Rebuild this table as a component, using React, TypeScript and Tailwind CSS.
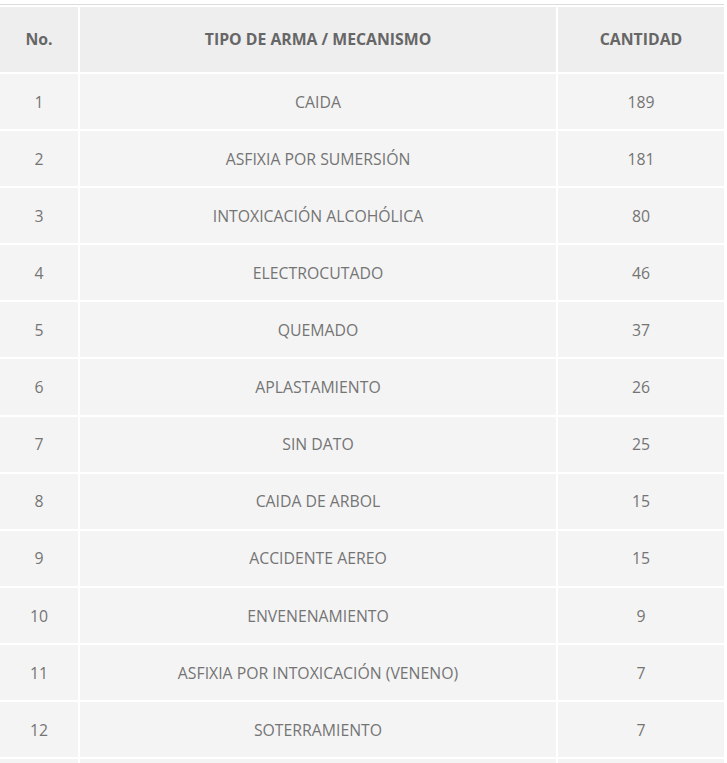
import React from "react";

const rows: [string, string, string][] = [
  ["1", "CAIDA", "189"],
  ["2", "ASFIXIA POR SUMERSIÓN", "181"],
  ["3", "INTOXICACIÓN ALCOHÓLICA", "80"],
  ["4", "ELECTROCUTADO", "46"],
  ["5", "QUEMADO", "37"],
  ["6", "APLASTAMIENTO", "26"],
  ["7", "SIN DATO", "25"],
  ["8", "CAIDA DE ARBOL", "15"],
  ["9", "ACCIDENTE AEREO", "15"],
  ["10", "ENVENENAMIENTO", "9"],
  ["11", "ASFIXIA POR INTOXICACIÓN (VENENO)", "7"],
  ["12", "SOTERRAMIENTO", "7"],
  ["13", "", ""],
];

export default function App() {
  return (
    <div
      className="w-[727px] h-[763px] overflow-hidden bg-white pt-[4px]"
      style={{ fontFamily: '"Open Sans", "Noto Sans", sans-serif' }}
    >
      <div className="w-[724px] h-[1px] bg-[#dcdcdc]" />
      <div className="grid grid-cols-[78px_476px_166px] gap-[2px] pt-[2px] w-[724px]">
        <div className="h-[65px] bg-[#eeeeee] flex items-center justify-center font-bold text-[15.8px] text-[#666666]">No.</div>
        <div className="h-[65px] bg-[#eeeeee] flex items-center justify-center font-bold text-[15.8px] text-[#666666]">TIPO DE ARMA / MECANISMO</div>
        <div className="h-[65px] bg-[#eeeeee] flex items-center justify-center font-bold text-[15.8px] text-[#666666]">CANTIDAD</div>
        {rows.map(([n, t, c]) => (
          <React.Fragment key={n}>
            <div className="h-[55.1px] bg-[#f4f4f4] flex items-center justify-center pt-[2px] text-[15.8px] text-[#747474]">{t ? n : ""}</div>
            <div className="h-[55.1px] bg-[#f4f4f4] flex items-center justify-center pt-[2px] text-[15.8px] text-[#747474]">{t}</div>
            <div className="h-[55.1px] bg-[#f4f4f4] flex items-center justify-center pt-[2px] text-[15.8px] text-[#747474]">{c}</div>
          </React.Fragment>
        ))}
      </div>
    </div>
  );
}
